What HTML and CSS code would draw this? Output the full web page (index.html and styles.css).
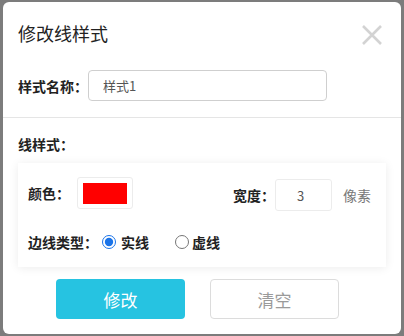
FILE: index.html
```html
<!DOCTYPE html>
<html lang="zh-CN">
<head>
    <meta charset="UTF-8">
    <title>修改线样式</title>
    <link rel="stylesheet" href="styles.css">
</head>
<body>
    <div class="dialog">
        <div class="dialog-header">
            <h2 class="dialog-title">修改线样式</h2>
            <span class="close-btn">
                <svg width="22" height="22" viewBox="0 0 22 22">
                    <path d="M2 2 L20 20 M20 2 L2 20" stroke="#d3d3d3" stroke-width="2.6" fill="none"/>
                </svg>
            </span>
        </div>

        <div class="form-row name-row">
            <label class="label">样式名称：</label>
            <input class="text-input" type="text" value="样式1">
        </div>

        <div class="divider"></div>

        <div class="section-title">线样式：</div>

        <div class="style-card">
            <div class="card-row">
                <label class="label">颜色：</label>
                <div class="color-box"><div class="color-swatch"></div></div>
                <div class="width-group">
                    <label class="label">宽度：</label>
                    <input class="width-input" type="text" value="3">
                    <span class="unit">像素</span>
                </div>
            </div>
            <div class="card-row radio-row">
                <label class="label">边线类型：</label>
                <label class="radio"><input type="radio" name="linetype" checked> 实线</label>
                <label class="radio"><input type="radio" name="linetype"> 虚线</label>
            </div>
        </div>

        <div class="actions">
            <button class="btn btn-primary">修改</button>
            <button class="btn btn-default">清空</button>
        </div>
    </div>
</body>
</html>
```

FILE: styles.css
```css
:root {
    --primary: #26c3e1;
    --text: #222;
}

body {
    margin: 0;
    padding: 2px 3px;
    background: #7c7c7c;
    font-family: "PingFang SC", "Noto Sans CJK SC", "Noto Sans", sans-serif;
    color: var(--text);
}

.dialog {
    width: 398px;
    height: 332px;
    background: #fff;
    border-radius: 6px;
    box-sizing: border-box;
    overflow: hidden;
}

.dialog-header {
    display: flex;
    justify-content: space-between;
    align-items: center;
    padding: 17px 18px 0 15px;
    height: 28px;
}

.dialog-title {
    margin: 0;
    font-size: 18px;
    font-weight: normal;
    line-height: 26px;
    color: #222;
}

.close-btn {
    display: flex;
    margin-top: 4px;
}

.form-row {
    display: flex;
    align-items: center;
}

.name-row {
    padding: 23px 0 0 15px;
}

.label {
    font-size: 14px;
    font-weight: bold;
    color: #222;
    white-space: nowrap;
}

.text-input {
    margin-left: 0;
    width: 239px;
    height: 31px;
    box-sizing: border-box;
    border: 1px solid #cfcfcf;
    border-radius: 4px;
    padding: 0 14px;
    font-family: inherit;
    font-size: 13px;
    color: #555;
    outline: none;
}

.divider {
    height: 1px;
    background: #e5e5e5;
    margin-top: 16px;
}

.section-title {
    padding: 17px 0 0 15px;
    font-size: 14px;
    font-weight: bold;
    line-height: 18px;
}

.style-card {
    margin: 10px 15px 0 15px;
    background: #fff;
    box-shadow: 0 1px 9px rgba(0,0,0,0.08);
    padding: 12px 10px 10px 10px;
    height: 82px;
}

.card-row {
    display: flex;
    align-items: center;
}

.color-box {
    margin-left: 7px;
    width: 56px;
    height: 32px;
    box-sizing: border-box;
    border: 1px solid #ececec;
    border-radius: 3px;
    padding: 5px 5px;
}

.color-swatch {
    width: 44px;
    height: 21px;
    background: #ff0000;
}

.width-group {
    display: flex;
    align-items: center;
    margin-left: auto;
    margin-top: 4px;
}

.width-input {
    margin-left: 0;
    width: 57px;
    height: 32px;
    box-sizing: border-box;
    border: 1px solid #ececec;
    border-radius: 3px;
    text-align: center;
    font-family: inherit;
    font-size: 13px;
    color: #555;
    outline: none;
    padding: 0 6px 0 0;
}

.unit {
    margin-left: 11px;
    font-size: 14px;
    color: #777;
    margin-right: 5px;
}

.radio-row {
    margin-top: 21px;
}

.radio {
    display: flex;
    align-items: center;
    font-size: 14px;
    font-weight: bold;
    margin-right: 22px;
}

.radio input {
    margin: 0 5px 0 4px;
    width: 14px;
    height: 14px;
    accent-color: #1a73e8;
}

.radio + .radio input {
    margin-left: 4px;
    margin-right: 3px;
}

.actions {
    display: flex;
    gap: 25px;
    padding: 12px 0 0 53px;
}

.btn {
    width: 129px;
    height: 40px;
    border-radius: 4px;
    font-family: inherit;
    font-size: 17px;
    cursor: pointer;
}

.btn-primary {
    background: var(--primary);
    color: #fff;
    border: none;
}

.btn-default {
    background: #fff;
    color: #9a9a9a;
    border: 1px solid #dcdcdc;
}
```
